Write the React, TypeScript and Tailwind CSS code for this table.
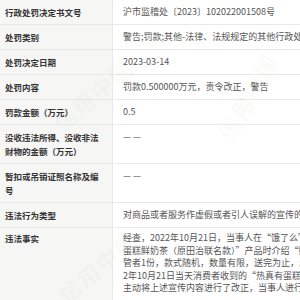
const rows: { label: string[]; value: string[] }[] = [
  { label: ["行政处罚决定书文号"], value: ["沪市监稽处〔2023〕102022001508号"] },
  { label: ["处罚类别"], value: ["警告;罚款;其他-法律、法规规定的其他行政处罚"] },
  { label: ["处罚决定日期"], value: ["2023-03-14"] },
  { label: ["处罚内容"], value: ["罚款0.500000万元，责令改正，警告"] },
  { label: ["罚款金额（万元）"], value: ["0.5"] },
  { label: ["没收违法所得、没收非法", "财物的金额（万元）"], value: ["— —"] },
  { label: ["暂扣或吊销证照名称及编", "号"], value: ["— —"] },
  { label: ["违法行为类型"], value: ["对商品或者服务作虚假或者引人误解的宣传的"] },
];

const facts = [
  "经查，2022年10月21日，当事人在“饿了么”平台销售“热真有",
  "蛋糕鲜奶茶（原田治联名款）”产品时介绍“购买即送联名杯套，",
  "管者1份，款式随机，数量有限，送完为止，乐享好礼”。经查，202",
  "2年10月21日当天消费者收到的“热真有蛋糕鲜奶茶”中未附赠品。",
  "主动将上述宣传内容进行了改正，当事人进行选择性回复。",
];

function Watermark({ className }: { className: string }) {
  return (
    <span
      className={`pointer-events-none absolute select-none whitespace-nowrap text-[22px] font-bold tracking-[2px] text-[#6b7b5e]/[0.045] ${className}`}
    >
      信用中国
    </span>
  );
}

export default function App() {
  return (
    <div className="relative h-[300px] w-[300px] overflow-hidden bg-white font-['Noto_Sans_CJK_SC','Noto_Sans',sans-serif]">
      <div className="w-[440px]">
        {rows.map((row, i) => (
          <div key={i} className="flex border-b border-[#e8e8e8]">
            <div className="w-[113px] shrink-0 border-r border-[#e8e8e8] bg-[#f6f6f5] pb-[5px] pl-[5px] pt-[5px] text-[8.5px] font-semibold leading-[14px] text-[#333]">
              {row.label.map((l, j) => (
                <div key={j} className="whitespace-nowrap">{l}</div>
              ))}
            </div>
            <div className="flex-1 pb-[5px] pl-[10px] pt-[5px] text-[9px] leading-[14px] text-[#555]">
              {row.value.map((v, j) => (
                <div key={j} className="whitespace-nowrap">{v}</div>
              ))}
            </div>
          </div>
        ))}
        <div className="flex border-b border-[#e8e8e8]">
          <div className="w-[113px] shrink-0 border-r border-[#e8e8e8] bg-[#f6f6f5] pb-[5px] pl-[5px] pt-[3px] text-[8.5px] font-semibold leading-[14px] text-[#333]">
            违法事实
          </div>
          <div className="flex-1 pb-[5px] pl-[10px] pt-[4px] text-[9px] leading-[12.5px] text-[#555]">
            {facts.map((f, j) => (
              <div key={j} className="whitespace-nowrap">{f}</div>
            ))}
          </div>
        </div>
      </div>
      <Watermark className="left-[45px] top-[78px] -rotate-[40deg]" />
      <Watermark className="left-[200px] top-[80px] -rotate-[60deg]" />
      <Watermark className="left-[50px] top-[250px] -rotate-[40deg]" />
    </div>
  );
}
